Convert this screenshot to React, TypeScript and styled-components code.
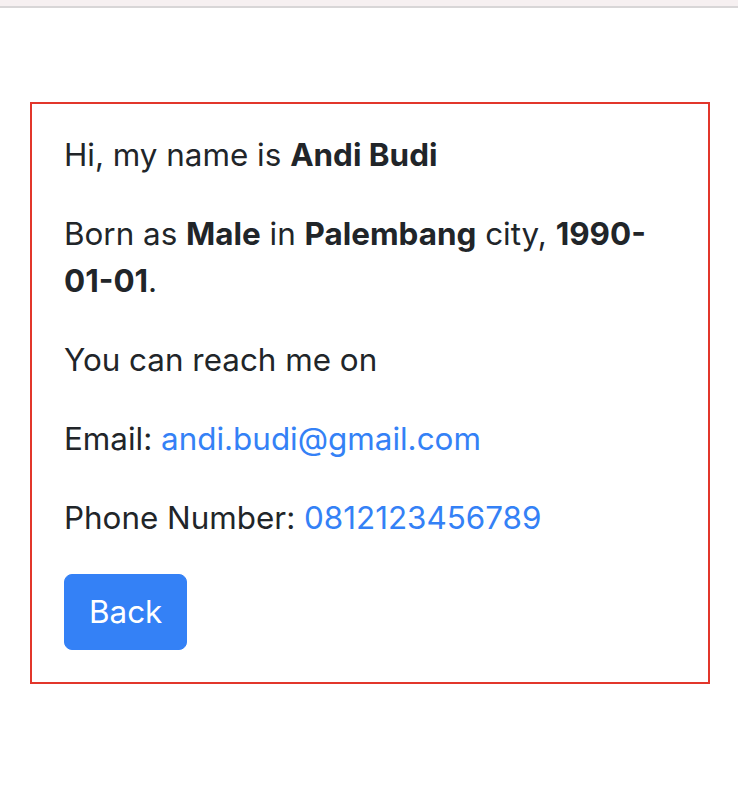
import React from "react";
import styled, { createGlobalStyle } from "styled-components";

const Global = createGlobalStyle`
  html, body { margin: 0; padding: 0; background: #ffffff; }
  body {
    font-family: Inter, "Liberation Sans", Arial, sans-serif;
    color: #212529;
    -webkit-font-smoothing: antialiased;
  }
`;

const TopBar = styled.div`
  height: 6px;
  background: #f6f0f1;
  border-bottom: 2px solid #d8d6d7;
`;

const Page = styled.main`
  padding: 94px 28px 0 30px;
`;

const Card = styled.section`
  border: 2px solid #e2362b;
  padding: 28px 32px 32px 32px;
  display: flex;
  flex-direction: column;
  align-items: flex-start;
`;

const Para = styled.p`
  margin: 0 0 32px 0;
  font-size: 31.4px;
  line-height: 47px;
`;

const Strong = styled.b`
  font-weight: 700;
`;

const Link = styled.a`
  color: #3481f6;
  text-decoration: none;
`;

const Button = styled.button`
  font-family: inherit;
  font-size: 31.4px;
  line-height: 48px;
  color: #ffffff;
  background: #3481f6;
  border: 1px solid #3481f6;
  border-radius: 8px;
  padding: 13px 24px;
  cursor: pointer;
`;

export default function App() {
  return (
    <>
      <Global />
      <TopBar />
      <Page>
        <Card>
          <Para>
            Hi, my name is <Strong>Andi Budi</Strong>
          </Para>
          <Para>
            Born as <Strong>Male</Strong> in <Strong>Palembang</Strong> city,{" "}
            <Strong>1990-01-01</Strong>.
          </Para>
          <Para>You can reach me on</Para>
          <Para>
            Email: <Link href="#">andi.budi@gmail.com</Link>
          </Para>
          <Para>
            Phone Number: <Link href="#">0812123456789</Link>
          </Para>
          <Button>Back</Button>
        </Card>
      </Page>
    </>
  );
}
